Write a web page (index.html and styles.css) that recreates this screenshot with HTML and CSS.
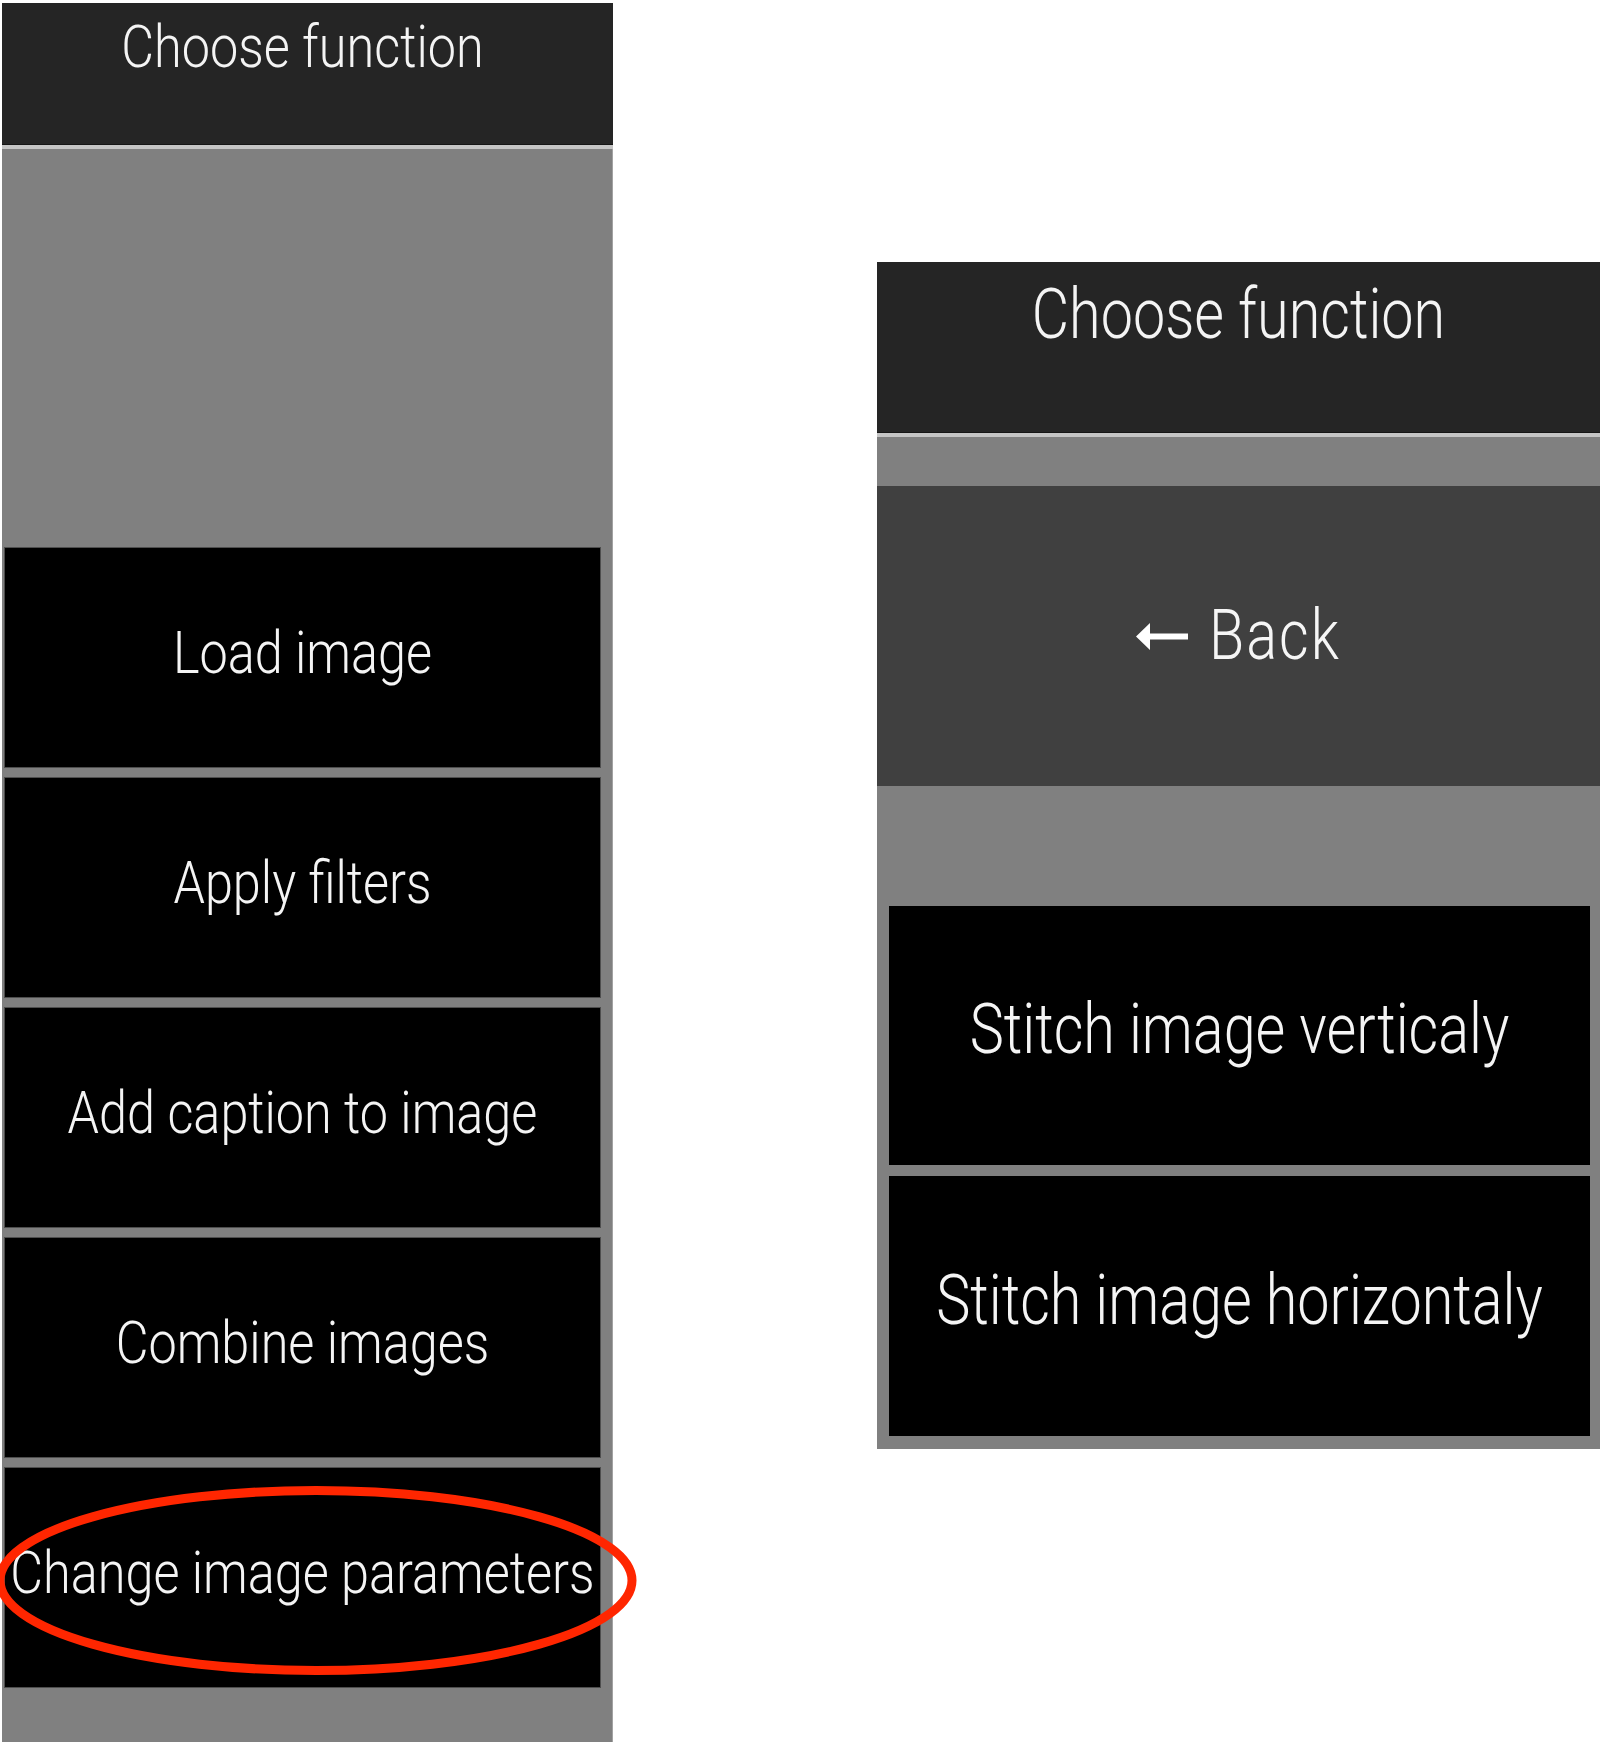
FILE: index.html
```html
<!DOCTYPE html>
<html lang="en">
<head>
<meta charset="utf-8">
<title>Choose function</title>
<link rel="stylesheet" href="styles.css">
</head>
<body>
<div class="canvas">
  <section class="panel panel-left">
    <header class="panel-header"><span class="label">Choose function</span></header>
    <div class="panel-body">
      <div class="btn-list">
        <div class="btn"><span class="label">Load image</span></div>
        <div class="btn"><span class="label">Apply filters</span></div>
        <div class="btn"><span class="label">Add caption to image</span></div>
        <div class="btn"><span class="label">Combine images</span></div>
        <div class="btn btn-marked">
          <span class="label">Change image parameters</span>
          <svg class="mark" width="642" height="189" viewBox="0 0 642 189" aria-hidden="true">
            <ellipse cx="321" cy="94.5" rx="316" ry="90" fill="none" stroke="#ff2600" stroke-width="9"/>
          </svg>
        </div>
      </div>
    </div>
  </section>

  <section class="panel panel-right">
    <header class="panel-header"><span class="label">Choose function</span></header>
    <div class="panel-body">
      <div class="back">
        <svg class="back-arrow" width="52" height="27" viewBox="0 0 52 27" aria-hidden="true">
          <polygon points="0,13.5 14,0 14,10.5 52,10.5 52,16.5 14,16.5 14,27" fill="#ffffff"/>
        </svg>
        <span class="label">Back</span>
      </div>
      <div class="btn-list">
        <div class="btn"><span class="label">Stitch image verticaly</span></div>
        <div class="btn btn-tall"><span class="label">Stitch image horizontaly</span></div>
      </div>
    </div>
  </section>
</div>
</body>
</html>
```

FILE: styles.css
```css
html, body {
  margin: 0;
  padding: 0;
  background: #ffffff;
}

body {
  width: 1600px;
  height: 1742px;
  overflow: hidden;
  font-family: "Roboto", "Liberation Sans", sans-serif;
  font-weight: 300;
  color: #f4f4f4;
}

.canvas {
  display: flex;
  align-items: flex-start;
}

.panel {
  display: flex;
  flex-direction: column;
  background: #808080;
  --stretch: 1.2;
}

.label {
  display: inline-block;
  line-height: 1;
  white-space: nowrap;
  transform: scaleY(var(--stretch));
  transform-origin: 50% 50%;
}

.panel-header {
  background: #252525;
  border-bottom: 4px solid #c5c5c5;
  box-shadow: inset 0 -1px 0 #151515;
  text-align: center;
  box-sizing: content-box;
}

.panel-body {
  display: flex;
  flex-direction: column;
  flex: 1;
}

.btn-list {
  display: flex;
  flex-direction: column;
}

.btn {
  background: #000000;
  display: flex;
  align-items: center;
  justify-content: center;
  box-sizing: border-box;
}

/* ---------- left panel ---------- */
.panel-left {
  width: 611px;
  height: 1739px;
  margin: 3px 0 0 2px;
  font-size: 50.4px;
  --stretch: 1.167;
}

.panel-left .panel-header {
  height: 128px;
  padding: 14px 10px 0 0;
}

.panel-left .panel-body {
  padding: 398px 0 0 2px;
  box-shadow: inset -1px 0 0 #a2a2a2;
}

.panel-left .btn-list {
  gap: 9px;
}

.panel-left .btn {
  width: 597px;
  height: 221px;
  border: 1px solid #4e4e4e;
  padding-bottom: 9px;
}

.btn-marked {
  position: relative;
}

.mark {
  position: absolute;
  left: -10px;
  top: 18px;
  overflow: visible;
}

/* ---------- right panel ---------- */
.panel-right {
  width: 723px;
  height: 1187px;
  margin: 262px 0 0 264px;
  font-size: 57.5px;
  --stretch: 1.21;
}

.panel-right .panel-header {
  height: 152px;
  padding-top: 19px;
}

.panel-right .panel-body {
  padding-top: 49px;
}

.back {
  height: 300px;
  background: #404040;
  display: flex;
  align-items: center;
  justify-content: center;
  gap: 21px;
  color: #f6f6f6;
}

.back .label {
  letter-spacing: 2px;
}

.back-arrow {
  display: block;
  flex: none;
}

.panel-right .btn-list {
  margin-top: 120px;
  padding: 0 10px 0 12px;
  gap: 11px;
}

.panel-right .btn {
  height: 259px;
  padding-bottom: 11px;
}

.panel-right .btn-tall {
  height: 260px;
}
```
